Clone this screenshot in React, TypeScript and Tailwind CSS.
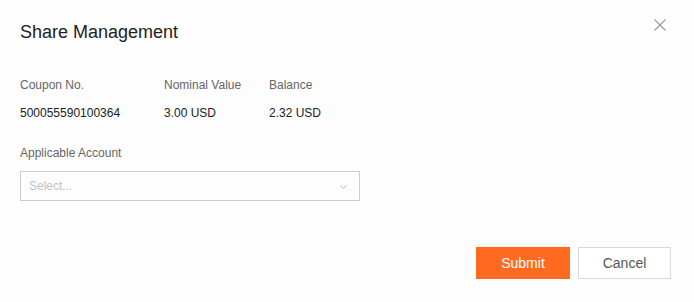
const details = [
  { label: 'Coupon No.', value: '500055590100364', width: 'w-[144px]' },
  { label: 'Nominal Value', value: '3.00 USD', width: 'w-[105px]' },
  { label: 'Balance', value: '2.32 USD', width: 'w-[100px]' },
]

export default function App() {
  return (
    <div className="relative w-[694px] h-[302px] bg-[#fdfdfd] px-5 pt-5 font-['Liberation_Sans',Arial,sans-serif] text-[#333]">
      {/* close */}
      <button className="absolute left-[654px] top-[19px] w-3 h-3 text-[#999]">
        <svg width="12" height="12" viewBox="0 0 12 12" fill="none" stroke="currentColor" strokeWidth="1.1">
          <path d="M0.5 0.5 L11.5 11.5 M11.5 0.5 L0.5 11.5" />
        </svg>
      </button>

      <h2 className="text-[18px] leading-6 text-[#222]">Share Management</h2>

      {/* coupon details */}
      <div className="flex mt-[33px]">
        {details.map((d) => (
          <div key={d.label} className={d.width}>
            <div className="text-xs leading-4 text-[#666]">{d.label}</div>
            <div className="text-xs leading-4 text-[#222] mt-3">{d.value}</div>
          </div>
        ))}
      </div>

      {/* account select */}
      <div className="mt-6 text-xs leading-4 text-[#666]">Applicable Account</div>
      <div className="mt-[10px] w-[340px] h-[30px] border border-[#cbcbd8] flex items-center justify-between pl-2 pr-[12px]">
        <span className="text-xs text-[#c2c2c2]">Select...</span>
        <svg width="7" height="4" viewBox="0 0 7 4" fill="none" stroke="#b8b8c8" strokeWidth="1" className="mt-[1px]">
          <path d="M0.5 0.5 L3.5 3.5 L6.5 0.5" />
        </svg>
      </div>

      {/* actions */}
      <div className="flex justify-end gap-2 mt-[46px] pr-[3px]">
        <button className="w-[94px] h-8 bg-[#ff6a21] text-white text-sm">Submit</button>
        <button className="w-[93px] h-8 border border-[#d9d9d9] text-[#555] text-sm bg-white">Cancel</button>
      </div>
    </div>
  )
}
